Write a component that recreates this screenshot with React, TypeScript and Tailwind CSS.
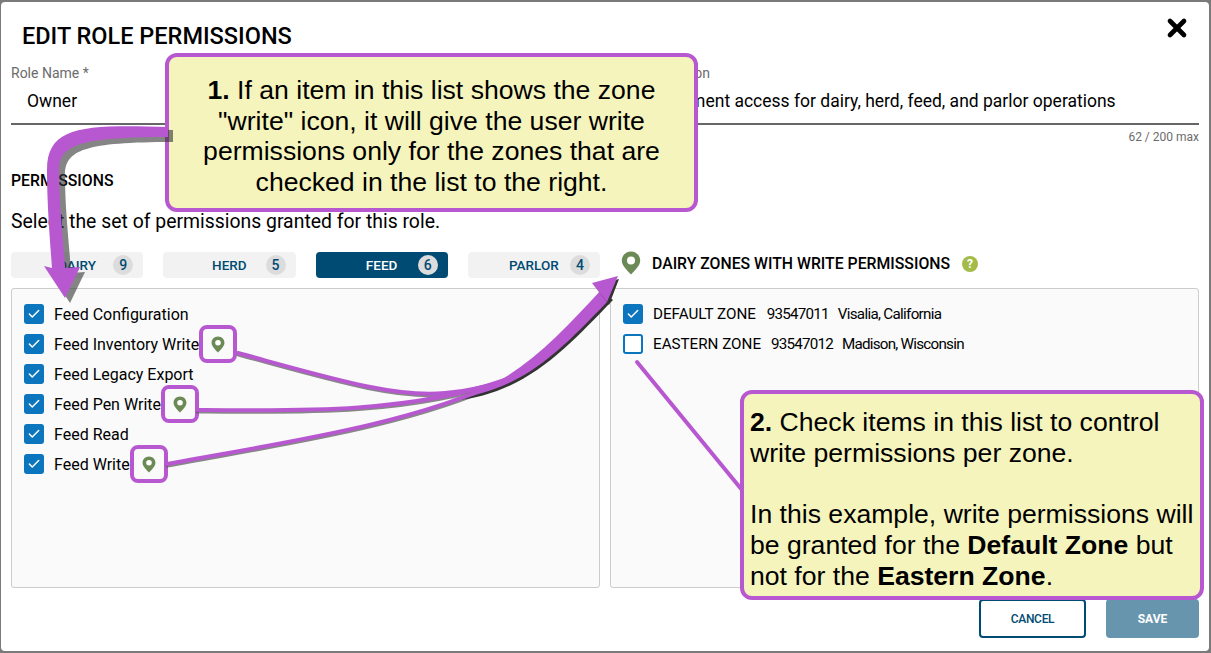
import { Check, X } from "lucide-react";

const FONT = "font-['Roboto','Liberation_Sans',sans-serif]";

function Pin({ big = false }: { big?: boolean }) {
  return (
    <svg viewBox="0 0 20 24" className={big ? "w-[20px] h-[24px] -mt-[5px]" : "w-[14px] h-[17px]"}>
      <path
        d="M10 0.5C4.8 0.5 0.8 4.5 0.8 9.5C0.8 15 6.5 19.5 10 23.5C13.5 19.5 19.2 15 19.2 9.5C19.2 4.5 15.2 0.5 10 0.5Z"
        fill="#6b8a55"
      />
      <circle cx="10" cy="9.5" r="4" fill="#ffffff" />
    </svg>
  );
}

function Box({ checked }: { checked: boolean }) {
  return checked ? (
    <span className="flex w-[20px] h-[20px] shrink-0 items-center justify-center rounded-[3px] bg-[#0b75bd]">
      <Check size={14} strokeWidth={2.5} className="text-white" />
    </span>
  ) : (
    <span className="block w-[20px] h-[20px] shrink-0 rounded-[3px] border-2 border-[#0b75bd] bg-white" />
  );
}

function Tab({ label, count, active = false }: { label: string; count: number; active?: boolean }) {
  return (
    <div
      className={
        active
          ? "grid grid-cols-[1fr_auto_1fr] items-center h-[26px] rounded-[4px] px-[10px] bg-[#004b73] text-white"
          : "grid grid-cols-[1fr_auto_1fr] items-center h-[26px] rounded-[4px] px-[10px] bg-[#f2f2f2] text-[#004b73]"
      }
    >
      <span />
      <span className="pt-[1px] text-[13.5px] font-medium">{label}</span>
      <span className="justify-self-end flex w-[20px] h-[20px] items-center justify-center rounded-full bg-[#dcdcdc] text-[14px] font-medium text-[#004b73]">
        {count}
      </span>
    </div>
  );
}

function Row({ label, pin = false }: { label: string; pin?: boolean }) {
  return (
    <div className="flex items-center h-[30px]">
      <Box checked />
      <span className="ml-[10px] pt-[1px] text-[16px] text-black whitespace-nowrap">{label}</span>
      {pin && (
        <span className="flex w-[38px] h-[38px] shrink-0 items-center justify-center rounded-[8px] border-4 border-[#b858d0]">
          <Pin />
        </span>
      )}
    </div>
  );
}

export default function App() {
  return (
    <div className={`relative w-[1211px] h-[653px] overflow-hidden bg-[#7a7a7a] ${FONT}`}>
      <div className="w-[1208px] h-[649px] mt-[2px] ml-[1px] rounded-[4px] bg-white px-[10px] text-black">
        <div className="flex items-start justify-between pt-[18px] h-[49px]">
          <h1 className="pl-[11px] text-[23.5px] leading-[32px] font-medium text-black">EDIT ROLE PERMISSIONS</h1>
          <X size={28} strokeWidth={4} className="mr-[8px] -mt-[6px] text-black" />
        </div>
        <div className="flex mt-[12px] border-b-2 border-[#666666] h-[62px]">
          <div className="w-[626px]">
            <div className="text-[14px] leading-[20px] text-[#6b6b6b]">Role Name *</div>
            <div className="mt-[6px] pl-[16px] text-[17.5px] leading-[24px]">Owner</div>
          </div>
          <div className="flex-1">
            <div className="ml-[2px] text-[14px] leading-[20px] text-[#6b6b6b]">Description</div>
            <div className="mt-[6px] -ml-[10px] text-[17.5px] leading-[24px] whitespace-nowrap">
              Management access for dairy, herd, feed, and parlor operations
            </div>
          </div>
        </div>
        <div className="mt-[4px] text-right text-[12px] leading-[16px] text-[#6b6b6b]">62 / 200 max</div>
        <div className="mt-[26px] text-[15.8px] leading-[20px] font-medium">PERMISSIONS</div>
        <div className="mt-[17px] text-[19.4px] leading-[28px]">Select the set of permissions granted for this role.</div>
        <div className="grid grid-cols-2 gap-x-[10px] mt-[16px]">
          <div className="grid grid-cols-4 gap-x-[20px]">
            <Tab label="DAIRY" count={9} />
            <Tab label="HERD" count={5} />
            <Tab label="FEED" count={6} active />
            <Tab label="PARLOR" count={4} />
          </div>
          <div className="flex items-center h-[26px] pl-[11px]">
            <Pin big />
            <span className="ml-[11px] -mt-[2px] text-[15.8px] font-medium whitespace-nowrap">DAIRY ZONES WITH WRITE PERMISSIONS</span>
            <span className="ml-[12px] -mt-[2px] flex w-[16px] h-[16px] items-center justify-center rounded-full bg-[#a4bb4a] text-[12px] font-bold text-white">
              ?
            </span>
          </div>
          <div className="mt-[10px] h-[300px] rounded-[3px] border border-[#cccccc] bg-[#fafafa] pl-[12px] pt-[10px]">
            <Row label="Feed Configuration" />
            <Row label="Feed Inventory Write" pin />
            <Row label="Feed Legacy Export" />
            <Row label="Feed Pen Write" pin />
            <Row label="Feed Read" />
            <Row label="Feed Write" pin />
          </div>
          <div className="mt-[10px] h-[300px] rounded-[3px] border border-[#cccccc] bg-[#fafafa] pl-[12px] pt-[10px]">
            <div className="flex items-center h-[30px] text-[15.2px] whitespace-nowrap">
              <Box checked />
              <span className="ml-[10px] pt-[1px]">DEFAULT ZONE</span>
              <span className="ml-[11px] pt-[1px] tracking-[-0.8px]">93547011</span>
              <span className="ml-[9px] pt-[1px] tracking-[-0.7px]">Visalia, California</span>
            </div>
            <div className="flex items-center h-[30px] text-[15.2px] whitespace-nowrap">
              <Box checked={false} />
              <span className="ml-[10px] pt-[1px]">EASTERN ZONE</span>
              <span className="ml-[10px] pt-[1px] tracking-[-0.8px]">93547012</span>
              <span className="ml-[9px] pt-[1px] tracking-[-0.75px]">Madison, Wisconsin</span>
            </div>
          </div>
        </div>
        <div className="flex justify-end gap-x-[20px] mt-[11px]">
          <div className="flex w-[107px] h-[39px] items-center justify-center rounded-[4px] border-2 border-[#004b73] bg-white text-[12px] tracking-[-0.3px] font-medium text-[#004b73]">
            CANCEL
          </div>
          <div className="flex w-[93px] h-[39px] items-center justify-center rounded-[4px] bg-[#6795ae] text-[12px] font-bold text-white">
            SAVE
          </div>
        </div>
      </div>

      <div className="absolute left-[165px] top-[53px] w-[533px] h-[159px] rounded-[12px] border-4 border-[#b858d0] bg-[#f6f4bd] px-[24px] pt-[18px] text-center text-[26.6px] leading-[30.6px] text-black font-['Liberation_Sans',sans-serif]">
        <b>1.</b> If an item in this list shows the zone "write" icon, it will give the user write permissions only for the zones that are checked in the list to the right.
      </div>

      <div className="absolute left-[740px] top-[390px] w-[464px] h-[210px] rounded-[12px] border-4 border-[#b858d0] bg-[#f6f4bd] pl-[6px] pt-[13px] text-[26.6px] leading-[30.7px] text-black whitespace-nowrap font-['Liberation_Sans',sans-serif]">
        <b>2.</b> Check items in this list to control
        <br />
        write permissions per zone.
        <br />
        <br />
        In this example, write permissions will
        <br />
        be granted for the <b>Default Zone</b> but
        <br />
        not for the <b>Eastern Zone</b>.
      </div>

      <svg className="absolute left-0 top-0 w-[1211px] h-[653px] pointer-events-none" viewBox="0 0 1211 653" fill="none">
        <g stroke="#555555" strokeOpacity="0.7" strokeLinecap="round" transform="translate(0.5 1.5)">
          <path d="M238 353C330 378 395 398 445 393C465 391 485 388 505 380" strokeWidth="4" />
          <path d="M197 410C300 411 410 413 505 380" strokeWidth="4" />
          <path d="M167 464C280 443 410 425 505 380" strokeWidth="4" />
        </g>
        <path d="M173 130C90 128 52 128 52 175C52 205 56 245 58 273L49 271L70 303L85 272L71 273C69 240 65 210 65 175C65 150 85 142 173 142Z" fill="#333333" fillOpacity="0.6" />
        <path d="M168 127C85 125 47 125 47 170C47 205 50 240 52 268L44 266L65 298L80 267L65 268C63 235 59 205 59 170C59 145 80 137 168 137Z" fill="#b858d0" />
        <path d="M450 399C510 388 555 340 601 290L611 298C565 345 525 392 450 399Z" fill="#333333" transform="translate(2 2)" />
        <g stroke="#b858d0" strokeLinecap="round">
          <path d="M238 353C330 378 395 398 445 393C465 391 485 388 505 380" strokeWidth="4" />
          <path d="M197 410C300 411 410 413 505 380" strokeWidth="4" />
          <path d="M167 464C280 443 410 425 505 380" strokeWidth="4" />
          <path d="M637 362L742 490" strokeWidth="4" />
        </g>
        <path d="M450 399C510 388 555 340 601 290L611 298C565 345 525 392 450 399Z" fill="#b858d0" />
        <path d="M593 283L618 277L608 303Z" fill="#333333" transform="translate(1 2)" />
        <path d="M592 283L618 276L607 302Z" fill="#b858d0" />
      </svg>
    </div>
  );
}
